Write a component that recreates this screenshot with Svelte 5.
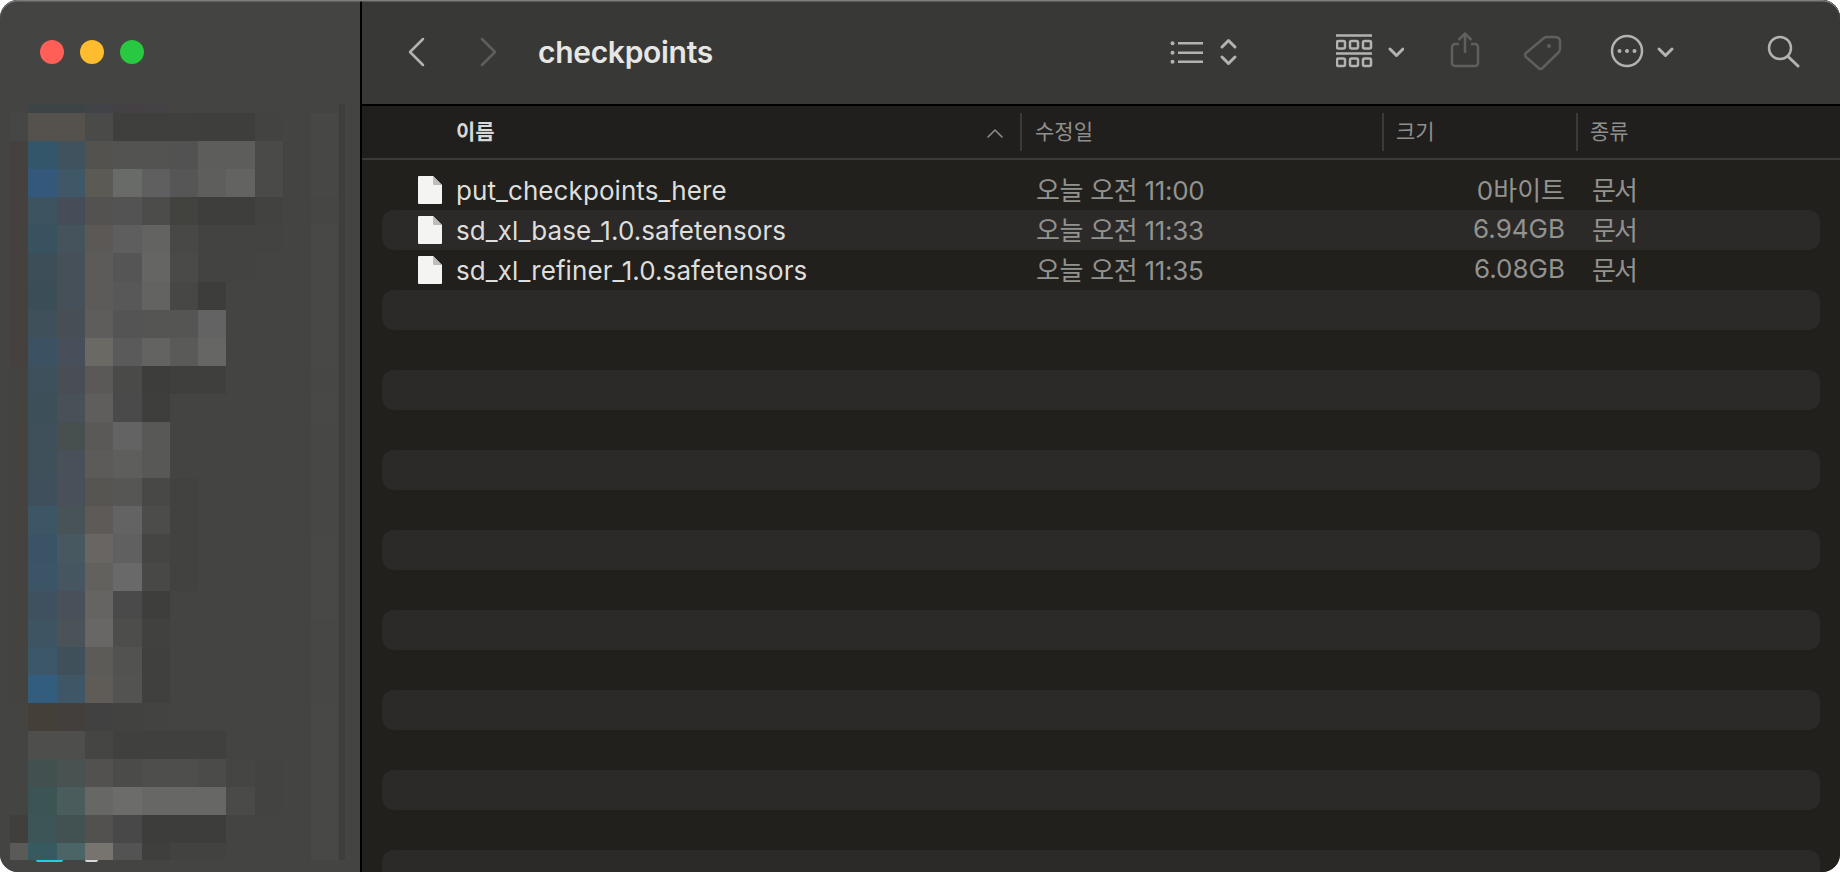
<script>
  const a = '#444442';
  const raw = [
    '. 3d4445 3d4445 424348 454044 454245 . . . . . .',
    '464646 55524e 55524e 4a4a48 3f3f3d 3f3f3d 3f3f3d 3e3e3c 3e3e3c 434341 . 474745',
    '44413e 34566b 40525d 54524e 535352 535352 525252 5d5d5b 5d5d5b 4a4a48 . 474745',
    '44413e 33587c 3f5868 5c5a55 696b69 5f5f5f 565656 5e5e5c 636361 4a4a48 . 474745',
    '44413e 3d5360 454e58 545250 535353 4c4c4a 42423f 3e3e3c 3e3e3c 424240 . 464644',
    '44413e 38525f 44535c 5c5856 5e5e5f 636362 484846 434341 434341 434341 . 484846',
    '44413e 3e4e58 465059 5c5b59 555555 656564 4a4a48 434341 434341 . . 484846',
    '44413e 3b4e58 465059 5c5b59 585858 636362 474745 3d3d3b . . . 484846',
    '44413e 3f505a 474f55 5e5d5b 545454 555553 555553 636363 . . . 484846',
    '44413e 3c5262 47505a 6a6964 5a5a5a 636362 5a5a58 666664 . . . 484846',
    '454340 3e505c 494e54 5a5957 4a4a48 3d3d3b 3f3f3d 3f3f3d . . . 474745',
    '454340 3d4f59 485058 5f5e5c 4a4a4a 3e3e3c . . . . . 484846',
    '454340 3f505b 47504f 5a5957 636363 585856 . . . . . 474745',
    '454340 3f505b 48505a 5c5b59 5e5e5c 585856 . . . . . 474745',
    '454340 3f505c 4a5059 565552 565654 484846 424240 . . . . 474745',
    '454340 3c5666 485358 5d5a57 636363 4c4c4a 424240 . . . . 474745',
    '454340 3a5466 485860 696563 606060 454543 424240 . . . . 484846',
    '454340 3c5566 465660 62615d 696969 484846 424240 . . . . 484846',
    '454340 3f505e 4a505a 656462 4a4a4a 3e3e3c . . . . . 484846',
    '454340 3e5463 4a5458 696765 4d4d4b 414140 . . . . . 474745',
    '454340 3b5768 40505a 5c5b58 525250 40403e . . . . . 474745',
    '454340 335d7e 3f5666 5f5c58 535352 40403e . . . . . 474745',
    '. 453f3a 433f3c 414141 424240 434341 . . . . . 484846',
    '. 4e4e4c 4e4e4c 454543 40403e 40403e 40403e 40403e . . . 484846',
    '. 42504f 485250 52514f 4b4b49 4e4e4c 4e4e4c 4b4b49 454543 434341 . 484846',
    '. 3d5455 4a5c5c 676765 6c6c6a 676765 676765 676765 4a4a48 434341 . 484846',
    '403f3c 3e5557 425152 53514f 484848 3d3d3b 3d3d3b 3d3d3b . . . 484846',
    '5a5a58 365a5f 4b6465 77736f 535353 3f3f3d 424240 424240 . . . 484846'
  ];
  const mosaic = raw.flatMap((row) => row.split(' ').map((c) => (c === '.' ? a : '#' + c)));

  const files = [
    { name: 'put_checkpoints_here', date: '오늘 오전 11:00', size: '0바이트', kind: '문서' },
    { name: 'sd_xl_base_1.0.safetensors', date: '오늘 오전 11:33', size: '6.94GB', kind: '문서' },
    { name: 'sd_xl_refiner_1.0.safetensors', date: '오늘 오전 11:35', size: '6.08GB', kind: '문서' }
  ];
  const rows = Array.from({ length: 18 }, (_, i) => files[i] ?? null);
</script>

<div class="window">
  <aside class="sidebar">
    <div class="lights">
      <span class="light red"></span>
      <span class="light yellow"></span>
      <span class="light green"></span>
    </div>
    <div class="scroller">
      <div class="mosaic">
        {#each mosaic as c}
          <span style="background:{c}"></span>
        {/each}
      </div>
      <div class="scrollbar"></div>
    </div>
    <div class="peek">
      <span class="peek-teal"></span>
      <span class="peek-white"></span>
    </div>
  </aside>

  <main class="main">
    <header class="toolbar">
      <svg class="ic-nav" viewBox="0 0 18 44" width="18" height="44"><path d="M16 9 3 22l13 13" class="st"/></svg>
      <svg class="ic-nav fwd" viewBox="0 0 18 44" width="18" height="44"><path d="M2 9l13 13L2 35" class="st dim"/></svg>
      <h1 class="title">checkpoints</h1>

      <div class="tools">
        <svg viewBox="0 0 72 44" width="72" height="44">
          <circle cx="4.500" cy="13.300" r="2" class="fl"/><circle cx="4.500" cy="22.700" r="2" class="fl"/><circle cx="4.500" cy="31.700" r="2" class="fl"/>
          <path d="M10 13.300h25M10 22.700h25M10 31.700h25" class="st2"/>
          <path d="M54 17l6.500-6.500L67 17M54 27l6.500 6.500L67 27" class="st3"/>
        </svg>
        <svg class="t-grid" viewBox="0 0 68 44" width="68" height="44">
          <path d="M0 5.500h36M0 23.500h36" class="st2"/>
          <g class="st4">
            <rect x="1" y="11" width="8" height="7.500" rx="1.500"/><rect x="14" y="11" width="8" height="7.500" rx="1.500"/><rect x="27" y="11" width="8" height="7.500" rx="1.500"/>
            <rect x="1" y="28.500" width="8" height="7.500" rx="1.500"/><rect x="14" y="28.500" width="8" height="7.500" rx="1.500"/><rect x="27" y="28.500" width="8" height="7.500" rx="1.500"/>
          </g>
          <path d="M54 19l6.500 6.500L67 19" class="st3"/>
        </svg>
        <svg class="t-share" viewBox="0 0 30 44" width="30" height="44">
          <path d="M9 14H5a3 3 0 0 0-3 3v16a3 3 0 0 0 3 3h20a3 3 0 0 0 3-3V17a3 3 0 0 0-3-3h-4" class="st2 dim"/>
          <path d="M15 23V4M8.500 10 15 3.500l6.500 6.500" class="st2 dim"/>
        </svg>
        <svg class="t-tag" viewBox="0 0 42 44" width="42" height="44">
          <path d="M4 23 22 8q1.500-1 3-1h8q5 0 5 5v7q0 2-1.500 3.500L20.500 38q-2 1.800-4 0L4 27q-2-2 0-4z" class="st2 dim"/>
          <circle cx="27" cy="16" r="2" fill="#5f5f5d"/>
        </svg>
        <svg class="t-more" viewBox="0 0 66 44" width="66" height="44">
          <circle cx="17" cy="21" r="15" class="st2"/>
          <circle cx="9.500" cy="21" r="2" class="fl"/><circle cx="17" cy="21" r="2" class="fl"/><circle cx="24.500" cy="21" r="2" class="fl"/>
          <path d="M49 19l6.500 6.500L62 19" class="st3"/>
        </svg>
        <svg class="t-search" viewBox="0 0 34 44" width="34" height="44">
          <circle cx="14" cy="18" r="11" class="st2"/>
          <path d="M22 26.500l10 9.500" class="st3"/>
        </svg>
      </div>
    </header>

    <div class="head">
      <div class="hcol name active">
        <span>이름</span>
        <svg viewBox="0 0 16 9" width="16" height="9"><path d="M1 8l7-7 7 7" class="sort"/></svg>
      </div>
      <div class="hcol date">수정일</div>
      <div class="hcol size">크기</div>
      <div class="hcol kind">종류</div>
    </div>

    <div class="list">
      {#each rows as f}
        <div class="row">
          {#if f}
            <div class="c-name">
              <svg class="doc" viewBox="0 0 24 28" width="24" height="28">
                <path d="M1 0h14l9 9v18a1 1 0 0 1-1 1H1a1 1 0 0 1-1-1V1a1 1 0 0 1 1-1z" fill="#f4f4f3"/>
                <path d="M15 0l9 9h-8a1 1 0 0 1-1-1z" fill="#bdbdbb"/>
              </svg>
              <span>{f.name}</span>
            </div>
            <div class="c-date">{f.date}</div>
            <div class="c-size">{f.size}</div>
            <div class="c-kind">{f.kind}</div>
          {/if}
        </div>
      {/each}
    </div>
  </main>
</div>

<style>
  :global(body) {
    margin: 0;
    background: #fff;
    font-family: Inter, "Noto Sans CJK KR", "Noto Sans", sans-serif;
  }

  .window {
    position: relative;
    display: flex;
    width: 1840px;
    height: 872px;
    border-radius: 18px;
    overflow: hidden;
    background: #444442;
  }

  .window::after {
    content: "";
    position: absolute;
    inset: 0;
    border-radius: 18px;
    box-shadow: inset 0 1.5px 0 #7d7d7b;
    pointer-events: none;
  }

  .sidebar {
    flex: 0 0 360px;
    display: flex;
    flex-direction: column;
    background: #444442;
    border-right: 2px solid #000;
  }

  .lights {
    display: flex;
    gap: 16px;
    height: 104px;
    padding: 40px 0 0 40px;
    box-sizing: border-box;
  }

  .light {
    width: 24px;
    height: 24px;
    border-radius: 50%;
  }

  .red { background: #ff5f57; }
  .yellow { background: #febc2e; }
  .green { background: #28c840; }

  .scroller {
    display: flex;
    height: 756px;
    overflow: hidden;
    padding-left: 10px;
  }

  .mosaic {
    display: grid;
    grid-template-columns: 18px 29px 28px repeat(8, 28.3px) 27px;
    grid-template-rows: 9px repeat(27, 28.1px);
    width: 329px;
    height: 768px;
  }

  .mosaic span {
    display: block;
  }

  .scrollbar {
    width: 6px;
    background: #3e3e3c;
  }

  .peek {
    display: flex;
    align-items: flex-start;
    padding-left: 36px;
    height: 12px;
  }

  .peek-teal {
    width: 27px;
    height: 2px;
    background: #1fd0e0;
    border-radius: 0 0 2px 2px;
  }

  .peek-white {
    width: 13px;
    height: 2px;
    margin-left: 22px;
    background: #d9d9d7;
    border-radius: 0 0 6px 6px;
  }

  .main {
    flex: 1;
    min-width: 0;
    display: flex;
    flex-direction: column;
    background: #21201d;
    overflow: hidden;
  }

  .toolbar {
    flex: 0 0 106px;
    display: flex;
    align-items: center;
    box-sizing: border-box;
    padding: 0 40px 0 45px;
    background: #383836;
    border-bottom: 2px solid #000;
  }

  .fwd { margin-left: 55px; }

  .title {
    margin: 0 0 0 40px;
    font-size: 30px;
    font-weight: 600;
    color: #e6e6e4;
    letter-spacing: -0.3px;
  }

  .tools {
    margin-left: auto;
    display: flex;
    align-items: center;
  }

  .tools svg { display: block; }
  .t-grid { margin-left: 96px; }
  .t-share { margin-left: 46px; }
  .t-tag { margin-left: 42px; }
  .t-more { margin-left: 46px; }
  .t-search { margin-left: 90px; }

  .st, .st2, .st3, .st4, .sort {
    fill: none;
    stroke: #b3b3b1;
    stroke-linecap: round;
    stroke-linejoin: round;
  }

  .st { stroke-width: 2.500px; }
  .st2 { stroke-width: 2.500px; stroke-linecap: butt; }
  .st3 { stroke-width: 3px; }
  .st4 { stroke-width: 2.500px; }
  .fl { fill: #b3b3b1; }
  .dim { stroke: #5f5f5d; }
  .sort { stroke: #8f8f8d; stroke-width: 1.500px; }

  .head {
    flex: 0 0 54px;
    box-sizing: border-box;
    display: flex;
    align-items: center;
    padding-left: 94px;
    background: #201f1d;
    border-bottom: 2px solid #3a3a37;
    font-size: 21px;
    color: #8f8f8d;
  }

  .hcol {
    box-sizing: border-box;
    height: 38px;
    display: flex;
    align-items: center;
    justify-content: space-between;
    padding-bottom: 4px;
  }

  .hcol svg { margin-top: 6px; }

  .name {
    width: 564px;
    padding-right: 17px;
  }

  .active {
    color: #d8d8d6;
    font-weight: 600;
  }

  .date, .size, .kind {
    border-left: 2px solid #3a3a38;
  }

  .date { width: 362px; padding-left: 13px; }
  .size { width: 194px; padding-left: 12px; }
  .kind { flex: 1; padding-left: 12px; }

  .list {
    padding: 10px 20px 0;
    display: flex;
    flex-direction: column;
  }

  .row {
    flex: 0 0 40px;
    display: grid;
    grid-template-columns: 654px 529px 1fr;
    align-items: center;
    font-size: 26px;
    color: #92928f;
    border-radius: 12px;
  }

  .row:nth-child(even) {
    background: #2b2a28;
  }

  .c-name {
    display: flex;
    align-items: center;
    gap: 14px;
    padding-left: 36px;
    color: #dededc;
    letter-spacing: 0.08px;
  }

  .doc { display: block; }

  .c-date, .c-size, .c-kind { padding-bottom: 3px; }
  .c-date { grid-column: 2; grid-row: 1; letter-spacing: -0.3px; }
  .c-size { grid-column: 2; grid-row: 1; text-align: right; }
  .c-kind { grid-column: 3; padding-left: 27px; letter-spacing: -2px; white-space: nowrap; }
</style>
